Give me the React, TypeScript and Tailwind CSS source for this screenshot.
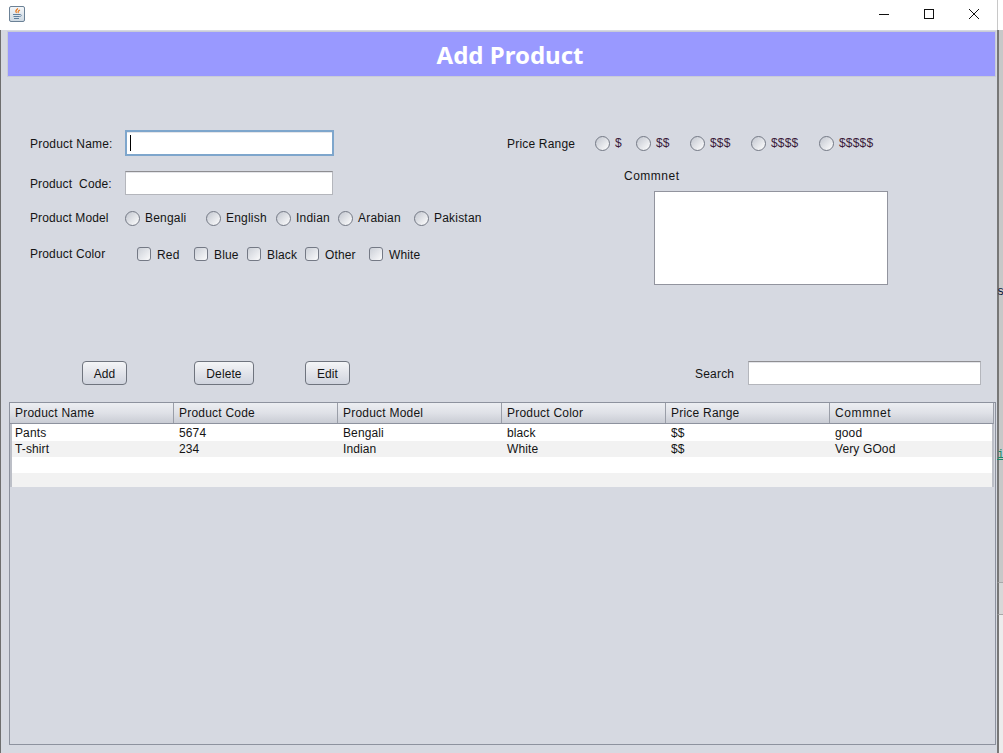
const font = "font-['Liberation_Sans',Arial,sans-serif]";

function Radio({ label, w, color }: { label: string; w: number; color?: string }) {
  return (
    <div className="flex items-center h-5 shrink-0" style={{ width: w }}>
      <span className="w-[15px] h-[15px] rounded-full border border-[#747985] bg-gradient-to-br from-[#c2c6cf] to-[#ffffff] shrink-0" />
      <span className={`ml-[5px] text-xs tracking-[0.2px] whitespace-nowrap ${color ?? "text-[#141414]"}`}>{label}</span>
    </div>
  );
}

function Check({ label, w }: { label: string; w: number }) {
  return (
    <div className="flex items-center h-5 shrink-0" style={{ width: w }}>
      <span className="w-[14px] h-[14px] rounded-[3px] border border-[#747985] bg-gradient-to-br from-[#cbcfd7] to-[#fbfbfc] shrink-0" />
      <span className="ml-[6px] pt-[2px] text-xs tracking-[0.15px] text-[#141414] whitespace-nowrap">{label}</span>
    </div>
  );
}

function Button({ label, w }: { label: string; w: string }) {
  return (
    <button className={`${w} h-6 pt-[2px] rounded-[4px] border border-[#6f747e] bg-gradient-to-b from-[#f4f5f7] via-[#e2e4ea] to-[#d0d4de] text-xs tracking-[0.1px] text-[#141414] shrink-0`}>
      {label}
    </button>
  );
}

const columns = ["Product Name", "Product Code", "Product Model", "Product Color", "Price Range", "Commnet"];
const rows = [
  ["Pants", "5674", "Bengali", "black", "$$", "good"],
  ["T-shirt", "234", "Indian", "White", "$$", "Very GOod"],
];

function JavaIcon() {
  return (
    <svg width="16" height="16" viewBox="0 0 16 16" className="ml-[9px] mb-[2px]">
      <defs>
        <linearGradient id="jv" x1="0" y1="0" x2="0" y2="1">
          <stop offset="0" stopColor="#f6f8fa" />
          <stop offset="1" stopColor="#cdd8e2" />
        </linearGradient>
      </defs>
      <rect x="0.5" y="0.5" width="15" height="15" rx="1.5" fill="url(#jv)" stroke="#6b8196" />
      <path d="M9 2.500c-2 1.500-3 2.500-1.500 4.500M11 4c-2 1-2.500 2-1.500 3" stroke="#e8791e" strokeWidth="1.100" fill="none" />
      <path d="M4 8.500h7M4.500 10.500h6M5 12.500h5" stroke="#5f7f9e" strokeWidth="1" fill="none" />
      <path d="M11 8.500c2 0 2 2-.5 2" stroke="#5f7f9e" strokeWidth="0.800" fill="none" />
    </svg>
  );
}

export default function App() {
  return (
    <div className={`${font} w-[1003px] h-[753px] flex overflow-hidden bg-white`}>
      <div className="w-px flex flex-col shrink-0">
        <div className="h-[30px] bg-white" />
        <div className="flex-1 bg-[#6e6e6e]" />
      </div>
      <div className="w-[996px] flex flex-col shrink-0">
        <div className="h-[30px] bg-white flex items-center shrink-0 -ml-px">
          <JavaIcon />
          <div className="ml-auto flex items-center mb-[2px]">
            <svg width="12" height="12" viewBox="0 0 12 12" className="mr-[33px]"><path d="M1 6.500h10" stroke="#111" strokeWidth="1" /></svg>
            <svg width="12" height="12" viewBox="0 0 12 12" className="mr-[33px]"><rect x="1.500" y="1.500" width="9" height="9" fill="none" stroke="#111" /></svg>
            <svg width="12" height="12" viewBox="0 0 12 12" className="mr-[17px]"><path d="M1 1l10 10M11 1L1 11" stroke="#111" strokeWidth="1" /></svg>
          </div>
        </div>
        <div className="flex-1 flex flex-col bg-[#d6d9e1] pl-[7px] min-h-0">
          <div className="h-[46px] mt-px -ml-px w-[989px] bg-[#9999ff] border border-[#c9ccd8] flex items-center justify-center shrink-0">
            <span className="text-white text-2xl font-bold font-['Noto_Sans',sans-serif] pl-[17px] pt-px">Add Product</span>
          </div>
          <div className="h-[284px] flex shrink-0">
            <div className="w-[499px] pl-[22px] pt-[53px] text-xs tracking-[0.2px] text-[#141414] shrink-0">
              <div className="flex items-center h-[26px]">
                <span className="w-[95px] pt-[2px]">Product Name:</span>
                <div className="w-[209px] h-[26px] bg-white border-2 border-[#7ea6cc] shadow-[inset_0_1px_0_#e4e5e9] flex items-center pl-[3px]">
                  <span className="w-px h-4 bg-black" />
                </div>
              </div>
              <div className="flex items-center h-6 mt-[15px]">
                <span className="w-[95px] pt-[2px] whitespace-pre tracking-[0.12px]">Product  Code:</span>
                <div className="w-[208px] h-6 bg-white border border-[#b4b6bc] border-t-[#8e8e92] shadow-[inset_0_1px_0_#e4e5e9]" />
              </div>
              <div className="flex items-center h-5 mt-[13px]">
                <span className="w-[95px] -mt-px tracking-[0.08px]">Product Model</span>
                <Radio label="Bengali" w={81} />
                <Radio label="English" w={70} />
                <Radio label="Indian" w={62} />
                <Radio label="Arabian" w={76} />
                <Radio label="Pakistan" w={70} />
              </div>
              <div className="flex items-center h-5 mt-4">
                <span className="w-[107px] -mt-px tracking-[0.15px]">Product Color</span>
                <Check label="Red" w={57} />
                <Check label="Blue" w={53} />
                <Check label="Black" w={58} />
                <Check label="Other" w={64} />
                <Check label="White" w={56} />
              </div>
            </div>
            <div className="pt-14 text-xs tracking-[0.2px] text-[#141414]">
              <div className="flex items-center h-5">
                <span className="w-[88px] pt-[2px]">Price Range</span>
                <Radio label="$" w={41} color="text-[#3a1a3a]" />
                <Radio label="$$" w={54} color="text-[#3a1a3a]" />
                <Radio label="$$$" w={61} color="text-[#3a1a3a]" />
                <Radio label="$$$$" w={68} color="text-[#3a1a3a]" />
                <Radio label="$$$$$" w={60} color="text-[#3a1a3a]" />
              </div>
              <div className="h-4 leading-4 mt-[15px] ml-[117px] tracking-[0.5px]">Commnet</div>
              <div className="w-[234px] h-[94px] mt-[7px] ml-[147px] bg-white border border-[#92949e]" />
            </div>
          </div>
          <div className="h-6 flex items-center shrink-0 pl-[74px]">
            <Button label="Add" w="w-[45px]" />
            <Button label="Delete" w="w-[60px] ml-[67px]" />
            <Button label="Edit" w="w-[45px] ml-[51px]" />
            <span className="ml-[345px] w-[53px] pt-[2px] text-xs tracking-[0.2px] text-[#141414]">Search</span>
            <div className="w-[233px] h-6 bg-white border border-[#b4b6bc] border-t-[#8e8e92] shadow-[inset_0_1px_0_#e4e5e9]" />
          </div>
          <div className="flex-1 mt-[17px] mb-[8px] ml-px w-[987px] border border-[#8d929e] flex flex-col min-h-0">
            <div className="flex w-[984px] h-[22px] border-b-2 border-[#8d929e] border-r border-r-[#9a9ea8] bg-gradient-to-b from-[#eceef2] via-[#dfe1e7] to-[#c9ccd4] shrink-0">
              {columns.map((c, i) => (
                <div key={c} className={`w-[164px] shrink-0 pl-[5px] text-xs leading-5 text-[#141414] ${i === 5 ? "tracking-[0.6px] border-none" : "tracking-[0.22px] border-r border-[#9a9ea8]"}`}>{c}</div>
              ))}
            </div>
            <div className="w-[984px] bg-white border-x-2 border-b-2 border-[#bcbfc7] h-[63px] shrink-0 -mt-px">
              {rows.map((r, i) => (
                <div key={r[0]} className={`flex h-4 ${i === 1 ? "bg-[#f2f2f2]" : ""} ${i === 0 ? "mt-px" : ""}`}>
                  {r.map((v, j) => (
                    <div key={j} className={`shrink-0 text-xs tracking-[0.12px] leading-4 text-[#141414] ${j === 0 ? "pl-[3px] w-[162px]" : j === 5 ? "pl-[5px] w-[144px]" : "pl-[5px] w-[164px]"}`}>{v}</div>
                  ))}
                </div>
              ))}
              <div className="h-4" />
              <div className="h-[14px] bg-[#f2f2f2]" />
            </div>
          </div>
        </div>
      </div>
      <div className="relative flex-1 flex flex-col overflow-hidden">
        <div className="h-[30px] bg-white border-l border-[#c8c8c8]" />
        <div className="flex-1 bg-[#c8c8c8] border-l-2 border-[#777777]" />
        <div className="h-[32px] bg-[#d8d8d8] border-l-2 border-t border-[#777777] border-t-[#a8a8a8]" />
        <div className="h-[139px] bg-[#ececec] border-l-2 border-t border-[#777777] border-t-[#a8a8a8]" />
        <span className="absolute left-0 top-[286px] text-xs leading-3 text-[#101a3a] font-['Liberation_Mono',monospace]">s</span>
        <span className="absolute left-0 top-[449px] text-xs leading-3 underline text-[#1a8a6a] font-['Liberation_Mono',monospace]">i</span>
      </div>
    </div>
  );
}
